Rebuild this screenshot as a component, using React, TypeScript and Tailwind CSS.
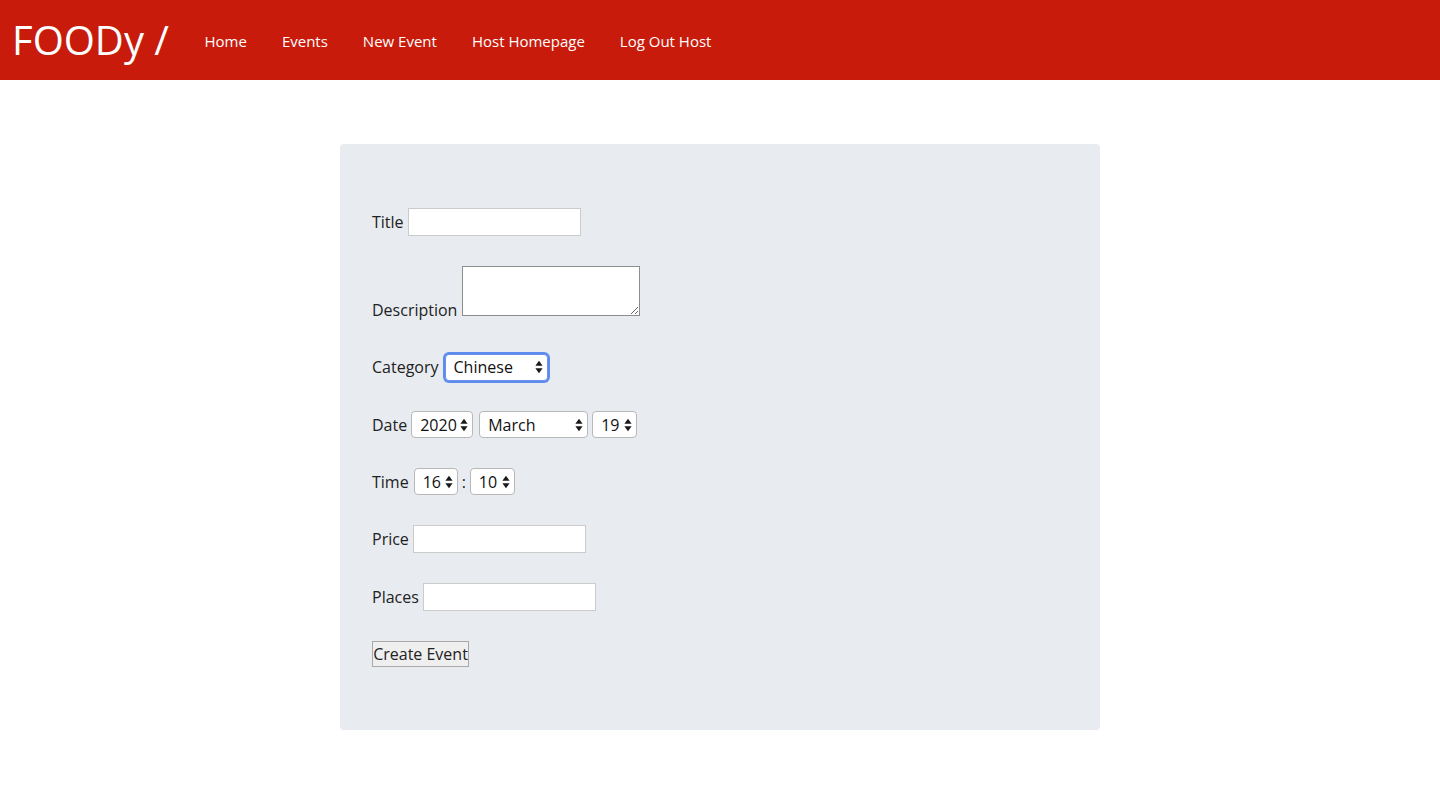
import React from "react";

const font = { fontFamily: '"Open Sans", "Noto Sans", sans-serif' };

function Arrows() {
  return (
    <svg width="8" height="14" viewBox="0 0 8 14" className="pointer-events-none absolute right-[5px] top-1/2 -translate-y-1/2">
      <path d="M4 0.8 L7.6 5.8 L0.4 5.8 Z" fill="#1a1a1a" />
      <path d="M4 13.2 L7.6 8.2 L0.4 8.2 Z" fill="#1a1a1a" />
    </svg>
  );
}

function Select({ value, width, focused }: { value: string; width: string; focused?: boolean }) {
  return (
    <div className={`relative ${width}`}>
      <div
        className={`flex h-[27px] w-full items-center rounded-[4px] border bg-white pl-[8px] text-[16px] text-[#111] ${
          focused ? "border-[#6d8fe8] ring-2 ring-[#5d8cf0]" : "border-[#b8b8b8]"
        }`}
      >
        {value}
      </div>
      <Arrows />
    </div>
  );
}

function TextInput({ width }: { width: string }) {
  return <input type="text" className={`h-[28px] ${width} border border-[#cbcbcb] bg-white px-1 outline-none`} />;
}

export default function App() {
  const nav = ["Home", "Events", "New Event", "Host Homepage", "Log Out Host"];

  return (
    <div className="min-h-screen bg-white text-[16px] text-[#222]" style={font}>
      <header className="flex h-[80px] items-center bg-[#c81b0b] text-white">
        <div className="pl-[12px] pr-[18px] text-[40px] leading-none">FOODy /</div>
        <nav className="flex">
          {nav.map((n) => (
            <a key={n} className="px-[17.5px] pt-[3px] text-[15px]">
              {n}
            </a>
          ))}
        </nav>
      </header>

      <main className="flex justify-center pt-[64px]">
        <form className="flex h-[586px] w-[760px] flex-col rounded-[4px] bg-[#e8ebf0] px-[32px] pt-[64px]">
          <div className="flex h-[28px] items-center gap-[4px]">
            <span>Title</span>
            <TextInput width="w-[173px]" />
          </div>

          <div className="mt-[30px] flex h-[50px] items-end gap-[5px]">
            <span className="mb-[-4px] leading-[20px]">Description</span>
            <textarea className="h-[50px] w-[178px] border border-[#8d8d8d] bg-white outline-none" />
          </div>

          <div className="mt-[37px] flex h-[28px] items-center gap-[6px]">
            <span>Category</span>
            <Select value="Chinese" width="w-[103px]" focused />
          </div>

          <div className="mt-[30px] flex h-[27px] items-center">
            <span className="mr-[4px]">Date</span>
            <Select value="2020" width="w-[62px]" />
            <div className="w-[6px]" />
            <Select value="March" width="w-[109px]" />
            <div className="w-[4px]" />
            <Select value="19" width="w-[45px]" />
          </div>

          <div className="mt-[30px] flex h-[27px] items-center">
            <span className="mr-[5px]">Time</span>
            <Select value="16" width="w-[44px]" />
            <span className="mx-[4px]">:</span>
            <Select value="10" width="w-[45px]" />
          </div>

          <div className="mt-[30px] flex h-[28px] items-center gap-[4px]">
            <span>Price</span>
            <TextInput width="w-[173px]" />
          </div>

          <div className="mt-[30px] flex h-[28px] items-center gap-[4px]">
            <span>Places</span>
            <TextInput width="w-[173px]" />
          </div>

          <div className="mt-[30px] flex">
            <button
              type="button"
              className="h-[26px] w-[97px] border border-[#a9a9a9] bg-[#efefef] text-[16px] leading-none text-[#222]"
            >
              Create Event
            </button>
          </div>
        </form>
      </main>
    </div>
  );
}
